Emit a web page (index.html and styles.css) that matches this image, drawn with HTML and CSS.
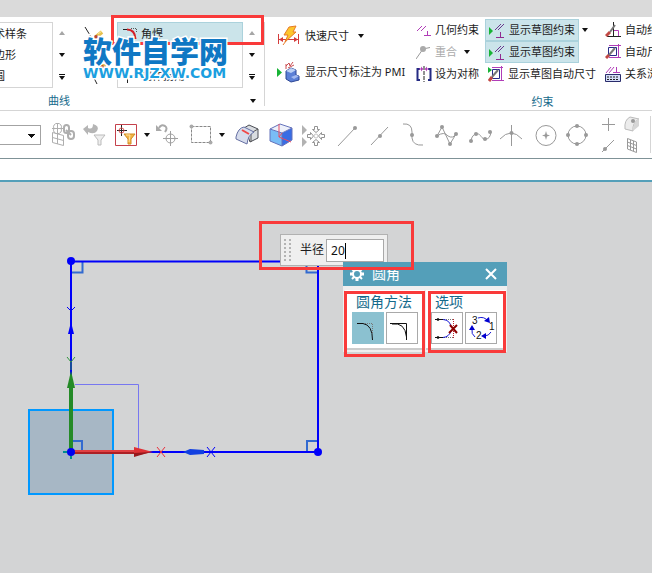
FILE: index.html
```html
<!DOCTYPE html>
<html lang="zh-CN">
<head>
<meta charset="utf-8">
<title>草图 - 圆角</title>
<link rel="stylesheet" href="styles.css">
</head>
<body>
<div class="titlebar"></div>

<header class="ribbon">
  <section class="group group-curve">
    <div class="group-body">
      <div class="gallery gallery-shapes">
        <button class="gallery-item"><span>术样条</span></button>
        <button class="gallery-item"><span>边形</span></button>
        <button class="gallery-item"><span>圆</span></button>
      </div>
      <div class="scroller">
        <button aria-label="向上"><svg width="6" height="4"><path d="M0 4L3 0L6 4z" fill="#a6a6a6"/></svg></button>
        <button aria-label="向下"><svg width="6" height="4"><path d="M0 0H6L3 4z" fill="#111"/></svg></button>
        <button aria-label="更多"><svg width="6" height="6"><path d="M0 0H6V1H0zM0 2H6L3 6z" fill="#111"/></svg></button>
      </div>
      <div class="trim-tools">
        <button aria-label="快速修剪"><svg width="22" height="20"><path d="M1 1L12 19" stroke="#222" stroke-dasharray="8 2" fill="none"/><path d="M12 11L18 6" stroke="#e5c04f" stroke-width="4"/><path d="M14 8L18 5" stroke="#fbeaa0"/><circle cx="12" cy="11" r="2" fill="#b9462f"/></svg></button>
        <button aria-label="快速延伸"><svg width="22" height="20"><path d="M0 12H8M8 10L13 20" stroke="#222" fill="none"/><path d="M18 3L22 0" stroke="#e5c04f" stroke-width="4"/><circle cx="18" cy="3" r="2" fill="#b9462f"/></svg></button>
      </div>
      <div class="gallery gallery-corner">
        <button class="gallery-item selected"><svg width="16" height="14"><path d="M1 2.500H6" stroke="#222"/><path d="M5 2.500Q13 2.500 13.500 12" stroke="#d32027" stroke-width="2" fill="none"/><path d="M9 1.500H14.500V6" stroke="#555" stroke-dasharray="1 1" fill="none"/></svg><span>角焊</span></button>
        <button class="gallery-item" aria-label="倒斜角"></button>
        <button class="gallery-item"><svg width="16" height="14"><path d="M5.500 14V6.500H13M5.500 2V0" stroke="#222" fill="none"/></svg><span>制作拐角</span></button>
      </div>
      <div class="scroller">
        <button aria-label="向上"><svg width="6" height="4"><path d="M0 4L3 0L6 4z" fill="#a6a6a6"/></svg></button>
        <button aria-label="向下"><svg width="6" height="4"><path d="M0 0H6L3 4z" fill="#111"/></svg></button>
        <button aria-label="更多"><svg width="6" height="6"><path d="M0 0H6V1H0zM0 2H6L3 6z" fill="#111"/></svg></button>
      </div>
    </div>
    <footer class="group-title"><span>曲线</span><button class="launcher" aria-label="曲线选项"><svg width="6" height="4"><path d="M0 0H6L3 4z" fill="#111"/></svg></button></footer>
  </section>

  <section class="group group-dimension">
    <button class="tool">
      <svg width="24" height="22"><path d="M2.500 9V19M22.500 9V19M3 14.500H22" stroke="#d43c3c" fill="none"/><path d="M3 14.500L7 12V17zM22 14.500L18 12V17z" fill="#d43c3c"/><path d="M13 2L20 1L17 7H20L9 17L12 10H8z" fill="#fcc62d" stroke="#e87a26"/><path d="M10 16L7 20" stroke="#e87a26"/></svg>
      <span>快速尺寸</span><svg class="drop" width="6" height="4"><path d="M0 0H6L3 4z" fill="#111"/></svg>
    </button>
    <button class="tool">
      <svg width="24" height="22"><path d="M1 7L6 11.500L1 16z" fill="#17b335"/><path d="M10 10L15 7L20 9V14L23 15V19L15 21L10 18z" fill="#5b7fd6" stroke="#2c4694"/><path d="M10 10L15 12L20 9L15 7z" fill="#bdd1f5"/><path d="M15 16L20 14L23 15L18 18z" fill="#a4baf0"/><path d="M10 8V3M10 5L13 2L14 5L17 1M12 7L18 4" stroke="#c9494d" fill="none"/></svg>
      <span>显示尺寸标注为 PMI</span>
    </button>
  </section>

  <section class="group group-constraint">
    <div class="columns">
      <div class="column column-geometry">
        <button class="tool"><svg width="16" height="18"><path d="M1 10L6 5M5 10L10 5M8 14.500H15M11.500 10V14" stroke="#b13db8" fill="none"/></svg><span>几何约束</span></button>
        <button class="tool" disabled><svg width="16" height="18"><path d="M0 16L7 6L14 4.500" stroke="#999" fill="none"/><circle cx="7" cy="6" r="3" fill="#aaa"/></svg><span>重合</span><svg class="drop" width="6" height="4"><path d="M0 0H6L3 4z" fill="#111"/></svg></button>
        <button class="tool"><svg width="16" height="18"><path d="M4 4H1.500V15H4M12 4H14.500V15H12" stroke="#252b83" stroke-width="2" fill="none"/><path d="M8 1V17" stroke="#222" stroke-dasharray="4 1"/><path d="M3 4H7M9 4H13" stroke="#b13db8"/><path d="M7 4L5 1.500V6.500zM9 4L11 1.500V6.500z" fill="#b13db8"/></svg><span>设为对称</span></button>
      </div>
      <div class="column column-display">
        <div class="split">
          <button class="tool pressed" aria-pressed="true"><svg width="18" height="18"><path d="M0 6L4 10L0 14z" fill="#17b335"/><path d="M6 9L12 3M9 9L15 3" stroke="#69358c" fill="none"/><path d="M7 16.500H15M11.500 11V16" stroke="#912b91" fill="none"/></svg><span>显示草图约束</span></button>
          <svg class="drop" width="6" height="4"><path d="M0 0H6L3 4z" fill="#111"/></svg>
        </div>
        <div class="split">
          <button class="tool pressed" aria-pressed="true"><svg width="18" height="18"><path d="M0 6L4 10L0 14z" fill="#17b335"/><path d="M6 9L12 3M9 9L15 3" stroke="#69358c" fill="none"/><path d="M7 16.500H15M11.500 11V16" stroke="#912b91" fill="none"/></svg><span>显示草图约束</span></button>
        </div>
        <button class="tool"><svg width="17" height="18"><path d="M0 2L4 5L0 8z" fill="#17b335"/><path d="M4.500 4.500H11.500V13.500H4.500z" stroke="#292b8b" fill="none"/><path d="M4 2.500H15M13.500 1V16M4 15.500H16" stroke="#b13db8" fill="none"/><path d="M1 16L4 12" stroke="#c24945" stroke-width="3"/><path d="M4 12L10 5" stroke="#777" stroke-width="2"/></svg><span>显示草图自动尺寸</span></button>
      </div>
      <div class="column column-auto">
        <button class="tool"><svg width="17" height="18"><path d="M2 15.500H16M8.500 1V15" stroke="#222"/><path d="M9 9.500H13.500V15" stroke="#b13db8" fill="none"/><path d="M1 15L5 11" stroke="#c24945" stroke-width="3"/><path d="M5 11L10 4" stroke="#777" stroke-width="2"/></svg><span>自动约束</span></button>
        <button class="tool"><svg width="17" height="18"><path d="M3.500 4.500H11.500V12.500H3.500z" stroke="#292b8b" fill="none"/><path d="M4 2.500H16M13.500 1V15M4 14.500H16" stroke="#b13db8" fill="none"/><path d="M1 15L4 12" stroke="#c24945" stroke-width="3"/><path d="M4 12L10 5" stroke="#777" stroke-width="2"/></svg><span>自动尺寸</span></button>
        <button class="tool"><svg width="17" height="18"><path d="M1 8L6 2M4 8L9 2M8 7.500H15M11.500 2V7" stroke="#b13db8" fill="none"/><path d="M.5 9.500H15.500V16.500H.5z" stroke="#292b6b" fill="#d5ddf7"/><path d="M2 12H14M2 14.500H14" stroke="#222" stroke-dasharray="2 1"/></svg><span>关系浏览器</span></button>
      </div>
    </div>
    <footer class="group-title"><span>约束</span></footer>
  </section>
</header>

<nav class="toolbar" aria-label="选择工具">
  <select class="filter-select" aria-label="选择过滤器"><option></option></select>
  <div class="cluster cluster-select">
    <button aria-label="关联"><svg width="24" height="24"><g fill="none" stroke="#aeaeae"><path d="M1 5.500H13M6.500 0V11M3 5.500a4 3.500 0 1 0 7 0a4 3.500 0 1 0-7 0M1.500 9.500L12.500 12.500V22.500L1.500 19.500zM1.500 14.500L12.500 17.500M6.500 11V21"/><g stroke-width="2"><rect x="13" y="2" width="5" height="8" rx="2.500"/><rect x="17" y="8" width="6" height="8" rx="3"/><path d="M15 7L20 12"/></g></g></svg></button>
    <button aria-label="还原过滤器"><svg width="24" height="24"><path d="M0 6L5 2V5Q10 7 10 1Q17 3 14 8Q11 12 5 9V12z" fill="#b5b5b5"/><path d="M11 12H22L18 17V22H15V17z" fill="#eee" stroke="#bbb"/></svg></button>
    <div class="split-tool">
      <button aria-label="选择过滤器选项"><svg width="24" height="24"><path d="M.5 1.500H21.500V22.500H.5z" fill="#fff" stroke="#c5414c"/><path d="M2 7.500H12M6.500 2V13" stroke="#222"/><circle cx="6.500" cy="7.500" r="2.500" fill="none" stroke="#d55"/><path d="M9 11H20L16 16V21H13V16z" fill="#f3b445" stroke="#d28c24"/><path d="M11 12H15L14 19" fill="none" stroke="#ffe3a2"/></svg></button>
      <button class="more" aria-label="更多"><svg width="6" height="4"><path d="M0 0H6L3 4z" fill="#111"/></svg></button>
      <button aria-label="定向"><svg width="24" height="24"><path d="M4 5Q6 1 10 3Q13 5 10 9" stroke="#a9a9a9" stroke-width="2" fill="none"/><path d="M1 2V8H7z" fill="#a9a9a9"/><g stroke="#a0a0a0" fill="none"><circle cx="15.500" cy="15.500" r="4.500"/><path d="M8 15.500H23M15.500 8V23"/></g></svg></button>
    </div>
    <div class="split-tool">
      <button aria-label="矩形选择"><svg width="26" height="24"><path d="M4.500 3.500H23.500V19.500H4.500z" fill="none" stroke="#888" stroke-dasharray="3 1"/><circle cx="4.500" cy="3.500" r="2" fill="#aaa"/><circle cx="23.500" cy="19.500" r="2" fill="#aaa"/></svg></button>
      <button class="more more-wide" aria-label="更多"><svg width="6" height="4"><path d="M0 0H6L3 4z" fill="#111"/></svg></button>
    </div>
  </div>
  <div class="cluster cluster-snap">
    <button aria-label="曲面"><svg width="24" height="24"><path d="M9 5L14 2L23 6V15L15 19L13 13z" fill="#d9dce0" stroke="#4a4d55"/><path d="M16 19V10L23 6M16 10L9 5" fill="none" stroke="#555"/><path d="M1 14Q3 5 9 4L19 9Q13 12 12 21L1 16z" fill="#d6dcec" stroke="#6670a3"/><path d="M7 7L14 11" stroke="#f04747" stroke-width="2"/></svg></button>
    <button aria-label="实体"><svg width="26" height="24"><g transform="translate(1 0)"><path d="M1 6L13 10V23L1 18z" fill="#79bdf6"/><path d="M13 10L23 5V17L13 23z" fill="#386de4"/><path d="M1 6L11 1L23 5L13 10z" fill="#edf0fa"/><path d="M1 6L11 1L23 5V17L13 23L1 18zM1 6L13 10V23M13 10L23 5" fill="none" stroke="#6472bb"/><path d="M10 1V14L22 19M10 14L13 10" stroke="#eb4a60" fill="none"/></g></svg></button>
    <button aria-label="移动"><svg width="26" height="24"><path d="M1 2L6 7L1 12zM1 14L6 19L1 24z" fill="#b2b2b2"/><g fill="#fff" stroke="#929292"><path d="M13.500 3.500H16.500V6.500H18.500L15 9.500L11.500 6.500H13.500zM13.500 22.500H16.500V19.500H18.500L15 16.500L11.500 19.500H13.500zM6.500 11.500H9.500V9.500L12.500 13L9.500 16.500V14.500H6.500zM23.500 11.500H20.500V9.500L17.500 13L20.500 16.500V14.500H23.500z"/></g><circle cx="15" cy="13" r="2" fill="none" stroke="#c5c5c5"/></svg></button>
    <button aria-label="端点"><svg width="26" height="24"><path d="M4 23L21 5" stroke="#999"/><circle cx="21" cy="5" r="2" fill="#999"/></svg></button>
    <button aria-label="中点"><svg width="26" height="24"><path d="M4 22L21 4" stroke="#999"/><circle cx="13" cy="13" r="2" fill="#999"/></svg></button>
    <button aria-label="控制点"><svg width="26" height="24"><path d="M3 1Q12 0 12 9V15Q13 23 23 22" stroke="#999" fill="none"/><circle cx="12" cy="12" r="2" fill="#999"/></svg></button>
    <button aria-label="极点"><svg width="26" height="24"><path d="M4 13L9 4L17 21L23 11M4 13Q11 8 15 13Q20 16 23 11" stroke="#999" fill="none"/><g fill="#999"><circle cx="4" cy="13" r="2"/><circle cx="9" cy="4" r="2"/><circle cx="17" cy="21" r="2"/><circle cx="23" cy="11" r="2"/></g></svg></button>
    <button aria-label="定义点"><svg width="26" height="24"><path d="M5 18Q6 11 11 11C15 10 15 17 20 16Q24 16 25 9" stroke="#999" fill="none"/><g fill="#999"><circle cx="5" cy="18" r="2"/><circle cx="10" cy="11" r="2"/><circle cx="19" cy="16" r="2"/><circle cx="24" cy="9" r="2"/></g></svg></button>
    <button aria-label="交点"><svg width="24" height="24"><path d="M1 16Q12 4 23 16M12.500 2V23" stroke="#999" fill="none"/><circle cx="12.500" cy="10" r="2" fill="#999"/></svg></button>
    <button aria-label="圆心"><svg width="26" height="24"><circle cx="14" cy="12.500" r="10" fill="none" stroke="#999"/><path d="M14 8L15 11.500L18 12.500L15 13.500L14 17L13 13.500L10 12.500L13 11.500z" fill="#999"/></svg></button>
    <button aria-label="象限点"><svg width="24" height="24"><circle cx="12" cy="12" r="9" fill="none" stroke="#999"/><g fill="#999"><circle cx="12" cy="3" r="2"/><circle cx="12" cy="21" r="2"/><circle cx="3" cy="12" r="2"/><circle cx="21" cy="12" r="2"/></g></svg></button>
  </div>
  <div class="cluster-mini">
    <button aria-label="现有点"><svg width="16" height="16"><path d="M1 8.500H14M7.500 2V15" stroke="#999"/></svg></button>
    <button aria-label="面上的点"><svg width="18" height="16"><path d="M1 13Q0 4 6 1L15 3Q8 7 9 15z" fill="#ececec" stroke="#bbb"/><path d="M9 15Q9 5 15 3V10z" fill="#d6d6d6"/><circle cx="9" cy="5" r="2" fill="#999"/></svg></button>
    <button aria-label="曲线上的点"><svg width="16" height="16"><path d="M1 15L13 3" stroke="#999"/><circle cx="4" cy="12" r="2" fill="#999"/></svg></button>
    <button aria-label="有界栅格"><svg width="18" height="16"><path d="M3.500 1.500L12.500 5V15.500L3.500 12zM6.500 3V13M9.500 4V14M3.500 5L12.500 8.500M3.500 8.500L12.500 12" fill="none" stroke="#999"/></svg></button>
  </div>
</nav>
<div class="cue-line"></div>

<main class="canvas">
  <svg class="sketch" width="100%" height="100%" aria-label="草图">
    <rect x="29" y="228" width="84" height="84" fill="#a7b7c5" stroke="#0098ff" stroke-width="2"/>
    <path d="M75 202.500H138.500V269" fill="none" stroke="#7777f0"/>
    <path d="M71 90.500H82.500V79M306.500 79V90.500H318M71 259H82V270M307 270V259H318" fill="none" stroke="#326ad0" stroke-width="2"/>
    <path d="M71 79.500H318M318 80V270M71 80V270M71 270H318" fill="none" stroke="#0000fa" stroke-width="2"/>
    <g fill="#0000fa"><circle cx="71" cy="79" r="4"/><circle cx="318" cy="270" r="4"/></g>
    <path d="M67 125L71 129L75 125M207 265L215 275M215 265L207 275" fill="none" stroke="#0000fa"/>
    <path d="M71 140L74 152H68z" fill="#0000fa"/>
    <path d="M183 270L190 267L204 268V272L190 273z" fill="#1240e0"/>
    <path d="M67 175L71 180L75 175M71 180V188" fill="none" stroke="#31953d"/>
    <path d="M157 265L165 275M165 265L157 275" fill="none" stroke="#e8303d"/>
    <path d="M63 270H79M71 262V277" stroke="#008c91" stroke-width="2"/>
    <path d="M71 270V200" stroke="#248a27" stroke-width="4"/><path d="M71 189L75 206H67z" fill="#248a27"/>
    <path d="M72 270H137" stroke="#ac2025" stroke-width="4"/><path d="M72 269H137" stroke="#e14043" stroke-width="2"/>
    <path d="M153 270L134 265V274z" fill="#df3035"/><path d="M151 270L134 275V271z" fill="#97191d"/>
    <circle cx="71" cy="270" r="4" fill="#0000f0"/>
  </svg>
</main>

<div class="value-box">
  <svg class="grip" width="7" height="24" aria-hidden="true"><path d="M1 1V24M6 1V24" stroke="#b4b4b4" stroke-width="2" stroke-dasharray="2 2"/></svg>
  <label for="radius">半径</label>
  <span class="field"><input id="radius" type="text" value="20"><i class="caret"></i></span>
</div>

<div class="dialog" role="dialog" aria-labelledby="dialog-title">
  <header class="dialog-head">
    <svg width="14" height="14" viewBox="-7 -7 14 14"><circle r="4" fill="none" stroke="#fff" stroke-width="2"/><path d="M-1.500-7H1.500V-4H-1.500zM-1.500 4H1.500V7H-1.500zM-7-1.500H-4V1.500H-7zM4-1.500H7V1.500H4z" fill="#fff"/><path d="M-5-5L-3-3M5 5L3 3M5-5L3-3M-5 5L-3 3" stroke="#fff" stroke-width="2"/></svg>
    <span id="dialog-title">圆角</span>
    <button class="close" aria-label="关闭"><svg width="12" height="12"><path d="M1 1L11 11M11 1L1 11" stroke="#fff" stroke-width="2"/></svg></button>
  </header>
  <div class="dialog-body">
    <section class="option-set">
      <h2>圆角方法</h2>
      <div class="choices">
        <button class="choice active" aria-label="修剪"><svg width="30" height="30"><path d="M4 10.500H10Q19.500 12 19.500 27" fill="none" stroke="#111"/><path d="M12 10.500H19.500V20" fill="none" stroke="#777" stroke-dasharray="1 1"/></svg></button>
        <button class="choice" aria-label="取消修剪"><svg width="30" height="30"><path d="M3 10.500H19.500V27" fill="none" stroke="#111"/><path d="M5 11Q18 9 19.500 24" fill="none" stroke="#111"/></svg></button>
      </div>
    </section>
    <section class="option-set">
      <h2>选项</h2>
      <div class="choices">
        <button class="choice" aria-label="删除第三条曲线"><svg width="30" height="30"><path d="M12 6.500H22M12 24.500H22" stroke="#777" stroke-dasharray="1 1"/><path d="M21.500 6V25" stroke="#c52028" stroke-dasharray="1 1"/><path d="M3 6.500H11M3 24.500H11" stroke="#111"/><path d="M11 6.500Q18 7 19 14M11 24.500Q17 24 19 18" stroke="#1717d5" fill="none"/><g fill="none" stroke="#111"><circle cx="6" cy="6.500" r="1"/><circle cx="6" cy="24.500" r="1"/></g><path d="M18 12L25 20M25 12L17 20" stroke="#8c0000" stroke-width="2"/></svg></button>
        <button class="choice" aria-label="创建备选圆角"><svg width="30" height="30"><g fill="none" stroke="#1717d5"><path d="M12 5Q18 3 22 8M25 19Q23 23 18 23M9 24Q5 21 6 16"/></g><path d="M24 10L18 8L23 4zM15 23L20 20V26zM3 17L6 12L9 17z" fill="#0000d0"/><g class="digits"><text x="6" y="11">3</text><text x="23" y="17">1</text><text x="10" y="26">2</text></g></svg></button>
      </div>
    </section>
  </div>
</div>

<div class="mark mark-tool"></div>
<div class="mark mark-radius"></div>
<div class="mark mark-method"></div>
<div class="mark mark-option"></div>

<div class="watermark"><strong>软件自学网</strong><span>WWW.RJZXW.COM</span></div>
</body>
</html>
```

FILE: styles.css
```css
* { box-sizing: border-box; }

html, body { height: 100%; }

body {
  margin: 0;
  display: flex;
  flex-direction: column;
  position: relative;
  overflow: hidden;
  background: #fff;
  color: #1c1c1c;
  font: 11px/16px "Noto Sans", "Noto Sans CJK SC", sans-serif;
}

button {
  margin: 0;
  padding: 0;
  border: 0;
  background: none;
  color: inherit;
  font: inherit;
  white-space: nowrap;
}

svg { display: block; flex: none; }

.titlebar { height: 17px; background: #dadada; flex: none; }

/* Ribbon */
.ribbon {
  display: flex;
  flex: none;
  height: 94px;
  padding-top: 2px;
  border-bottom: 1px solid #d5d5d5;
  overflow: hidden;
}

.group { display: flex; flex-direction: column; flex: none; }

.group-curve { width: 265px; margin: 3px 0 4px; border-right: 1px solid #d5d5d5; }
.group-body { display: flex; height: 66px; }

.gallery {
  display: flex;
  flex-direction: column;
  border: 1px solid #d5d5d5;
}
.gallery-shapes { width: 53px; border-left: 0; align-items: flex-end; padding-right: 25px; }
.gallery-shapes .gallery-item:nth-child(2) { margin-right: 11px; }
.gallery-shapes .gallery-item:nth-child(3) { margin-right: 22px; }
.gallery-corner { width: 126px; }
.gallery-item { display: flex; align-items: center; gap: 3px; flex: 1; }
.gallery-corner .gallery-item { padding-left: 4px; }
.gallery-item.selected { background: #cbe4ea; box-shadow: 0 0 0 1px #abd2dc; }

.scroller { display: flex; flex-direction: column; width: 17px; }
.scroller button { flex: 1; display: grid; place-items: center; }

.trim-tools { display: flex; flex-direction: column; justify-content: space-between; width: 47px; padding: 4px 0 4px 14px; }

.group-title {
  display: flex;
  align-items: center;
  justify-content: center;
  margin-top: auto;
  color: #156a8b;
}
.group-curve .group-title { justify-content: space-between; padding: 0 8px 0 48px; margin-bottom: -3px; }

.group-dimension { width: 148px; padding: 6px 0 0 11px; gap: 14px; }
.tool { display: flex; align-items: center; gap: 4px; height: 22px; text-align: left; }
.group-dimension .tool { gap: 5px; }
.tool:disabled { color: #aaa; }
.drop { margin: 0 4px; }

.group-constraint { padding-left: 3px; }
.columns { display: flex; }
.column { flex: none; }
.column-geometry { width: 69px; }
.column-geometry .tool { gap: 3px; }
.column-display { width: 120px; }
.column-auto { width: 74px; }
.column-auto .tool { gap: 3px; }
.split { display: flex; align-items: center; }
.pressed { width: 94px; padding-left: 3px; gap: 2px; background: #cbe4ea; border: 1px solid #abd2dc; }
.column-display > .tool { padding-left: 3px; gap: 3px; }
.split > .drop { margin-left: 3px; }
.group-constraint .group-title { padding-right: 10px; }

/* Selection toolbar */
.toolbar {
  display: flex;
  align-items: center;
  flex: none;
  height: 48px;
  border-bottom: 1px solid #7f9297;
  overflow: hidden;
}
.toolbar button { flex: none; width: 24px; height: 24px; }
.filter-select {
  appearance: none;
  flex: none;
  width: 41px;
  height: 20px;
  border: 1px solid #a3a3a3;
  border-left: 0;
  border-radius: 0;
  background: linear-gradient(#111, #111) no-repeat 29px 9px / 5px 1px, linear-gradient(#111, #111) no-repeat 28px 8px / 7px 1px, linear-gradient(#111, #111) no-repeat 30px 10px / 3px 1px, linear-gradient(#111, #111) no-repeat 31px 11px / 1px 1px, #fff;
}
.cluster { display: flex; flex: none; }
.cluster-select { gap: 8px; margin-left: 10px; }
.cluster-snap { gap: 9px; margin-left: 2px; }
.split-tool { display: flex; align-items: center; }
.toolbar .more { width: 16px; display: grid; place-items: center; }
.toolbar .more-wide { width: 22px; }
.cluster-mini {
  display: grid;
  grid-template-columns: 23px 26px;
  gap: 5px 0;
  flex: none;
  margin-left: 12px;
  border-right: 1px solid #d5d5d5;
}
.cluster-mini button { width: 18px; height: 16px; }

.cue-line { flex: none; height: 23px; border-bottom: 2px solid #549fb9; }

/* Graphics window */
.canvas { flex: 1; min-height: 0; background: #d3d4d5; }

.value-box {
  position: absolute;
  left: 280px;
  top: 234px;
  display: flex;
  align-items: center;
  padding: 3px;
  border: 1px solid #b1b1b1;
  background: #efefef;
  font-size: 12px;
}
.value-box label { margin: 0 2px 0 9px; }
.field { position: relative; display: block; }
.field input {
  display: block;
  width: 58px;
  height: 23px;
  padding: 0 4px;
  border: 1px solid #a9a9a9;
  border-radius: 0;
  background: #fff;
  color: #111;
  font: inherit;
}
.caret { position: absolute; left: 19px; top: 4px; width: 1px; height: 16px; background: #000; }

.dialog {
  position: absolute;
  left: 343px;
  top: 262px;
  width: 164px;
  background: #efefef;
  font-size: 14px;
}
.dialog-head {
  display: flex;
  align-items: center;
  gap: 8px;
  height: 24px;
  padding: 0 10px 0 7px;
  background: #549fb9;
  color: #fff;
}
.close { margin-left: auto; }
.dialog-body { display: grid; grid-template-columns: 79px 1fr; gap: 2px; padding: 4px 1px 2px 2px; }
.option-set { padding: 2px 4px 4px 7px; background: #fff; border-bottom: 2px solid #ccc; }
.option-set + .option-set { padding-left: 5px; }
.option-set h2 { margin: 0 0 0 4px; font: inherit; line-height: 20px; color: #156a8b; white-space: nowrap; }
.choices { display: flex; gap: 2px; }
.choice { flex: none; width: 32px; height: 32px; border: 1px solid #a9a9a9; background: #fff; }
.choice.active { border-color: #8bc1d0; background: #8bc1d0; }
.digits { font: 10px "Liberation Sans", sans-serif; fill: #111; }

/* Callouts */
.mark { position: absolute; border: 3px solid #f93a3a; pointer-events: none; }
.mark-tool { left: 111px; top: 15px; width: 153px; height: 30px; }
.mark-radius { left: 259px; top: 221px; width: 155px; height: 49px; }
.mark-method { left: 344px; top: 291px; width: 81px; height: 66px; }
.mark-option { left: 428px; top: 291px; width: 78px; height: 62px; }

.watermark {
  position: absolute;
  left: 83px;
  top: 35px;
  display: flex;
  flex-direction: column;
  color: #0f78c4;
  paint-order: stroke fill;
  -webkit-text-stroke: 3px #fff;
  white-space: nowrap;
}
.watermark strong { font: 900 29px/31px "Noto Sans CJK SC", sans-serif; }
.watermark span { font: bold 14px/14px "DejaVu Sans", sans-serif; color: #1c9fe0; }
```
